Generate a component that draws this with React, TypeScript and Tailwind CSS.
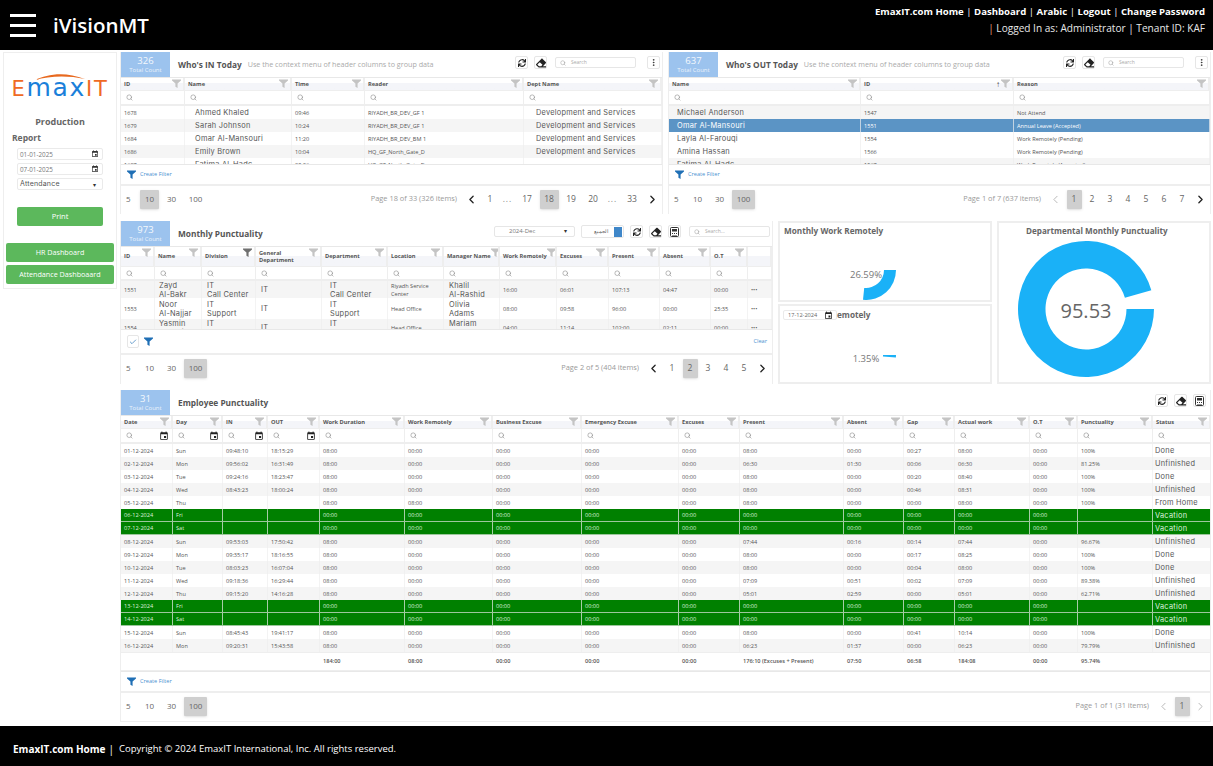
import { Check, ChevronLeft, ChevronRight, EllipsisVertical, Search } from "lucide-react";
import { FaEraser, FaSync } from "react-icons/fa";
import { MdEvent } from "react-icons/md";

type Column = {
  title: string;
  big?: boolean;
  indent?: string;
  cal?: boolean;
  dark?: boolean;
  sort?: boolean;
  blank?: boolean;
};

const IN_GRID = "grid grid-cols-[64px_107px_73px_159px_138px]";
const OUT_GRID = "grid grid-cols-[192px_153px_196px]";
const MONTH_GRID = "grid grid-cols-[34px_47px_54px_66px_66px_56px_56px_57px_52px_51px_51px_37px_24px]";
const EMP_GRID = "grid grid-cols-[52px_50px_45px_52px_85px_88px_89px_97px_61px_104px_60px_51px_75px_48px_75px_58px]";

const inColumns: Column[] = [
  { title: "ID" },
  { title: "Name", big: true, indent: "pl-[10px]" },
  { title: "Time" },
  { title: "Reader" },
  { title: "Dept Name", big: true, indent: "pl-[12px]" },
];

const inRows = [
  ["1678", "Ahmed Khaled", "09:46", "RIYADH_BR_DEV_GF 1", "Development and Services"],
  ["1679", "Sarah Johnson", "10:24", "RIYADH_BR_DEV_GF 1", "Development and Services"],
  ["1684", "Omar Al-Mansouri", "11:20", "RIYADH_BR_DEV_BM 1", "Development and Services"],
  ["1686", "Emily Brown", "10:04", "HQ_GF_North_Gate_D", "Development and Services"],
  ["1687", "Fatima Al-Hadc", "09:36", "HQ_GF_North_Gate_D", ""],
];

const outColumns: Column[] = [
  { title: "Name", big: true, indent: "pl-[8px]" },
  { title: "ID", sort: true },
  { title: "Reason" },
];

const outRows = [
  ["Michael Anderson", "1547", "Not Attend"],
  ["Omar Al-Mansouri", "1551", "Annual Leave (Accepted)"],
  ["Layla Al-Farouqi", "1554", "Work Remotely (Pending)"],
  ["Amina Hassan", "1566", "Work Remotely (Pending)"],
  ["Fatima Al-Hadc", "1567", "Work Remotely (Accepted)"],
];

const monthColumns: Column[] = [
  { title: "ID" },
  { title: "Name", big: true, indent: "pl-[4px]" },
  { title: "Division", big: true, indent: "pl-[5px]", dark: true },
  { title: "General\nDepartment", big: true, indent: "pl-[5px]" },
  { title: "Department", big: true, indent: "pl-[8px]" },
  { title: "Location" },
  { title: "Manager Name", big: true, indent: "pl-[5px]" },
  { title: "Work Remotely" },
  { title: "Excuses" },
  { title: "Present" },
  { title: "Absent" },
  { title: "O.T" },
  { title: "", blank: true },
];

const monthRows = [
  ["1551", "Zayd\nAl-Bakr", "IT\nCall Center", "IT", "IT\nCall Center", "Riyadh Service Center", "Khalil\nAl-Rashid", "16:00", "06:01", "107:13", "04:47", "00:00", "•••"],
  ["1553", "Noor\nAl-Najjar", "IT\nSupport", "IT", "IT\nSupport", "Head Office", "Olivia\nAdams", "08:00", "09:58", "96:00", "00:00", "25:35", "•••"],
  ["1554", "Yasmin\nAl-Amin", "IT\nSupport", "IT", "IT\nSupport", "Head Office", "Mariam\nSaleh", "04:00", "11:14", "102:00", "02:11", "00:00", "•••"],
];

const empColumns: Column[] = [
  { title: "Date", cal: true },
  { title: "Day", cal: true },
  { title: "IN", cal: true },
  { title: "OUT", cal: true },
  { title: "Work Duration" },
  { title: "Work Remotely" },
  { title: "Business Excuse" },
  { title: "Emergency Excuse" },
  { title: "Excuses" },
  { title: "Present" },
  { title: "Absent" },
  { title: "Gap" },
  { title: "Actual work" },
  { title: "O.T" },
  { title: "Punctuality" },
  { title: "Status", big: true },
];

function work(date: string, day: string, inT: string, outT: string, present: string, absent: string, gap: string, actual: string, pct: string, status: string) {
  return [date, day, inT, outT, "08:00", "00:00", "00:00", "00:00", "00:00", present, absent, gap, actual, "00:00", pct, status];
}

function vacation(date: string, day: string) {
  return [date, day, "", "", "00:00", "00:00", "00:00", "00:00", "00:00", "00:00", "00:00", "00:00", "00:00", "00:00", "", "Vacation"];
}

const empRows = [
  work("01-12-2024", "Sun", "09:48:10", "18:15:29", "08:00", "00:00", "00:27", "08:00", "100%", "Done"),
  work("02-12-2024", "Mon", "09:56:02", "16:31:49", "06:30", "01:30", "00:06", "06:30", "81.25%", "Unfinished"),
  work("03-12-2024", "Tue", "09:24:16", "18:23:47", "08:00", "00:00", "00:20", "08:40", "100%", "Done"),
  work("04-12-2024", "Wed", "08:43:23", "18:00:24", "08:00", "00:00", "00:46", "08:31", "100%", "Unfinished"),
  ["05-12-2024", "Thu", "", "", "08:00", "08:00", "00:00", "00:00", "00:00", "08:00", "00:00", "00:00", "08:00", "00:00", "100%", "From Home"],
  vacation("06-12-2024", "Fri"),
  vacation("07-12-2024", "Sat"),
  work("08-12-2024", "Sun", "09:53:03", "17:50:42", "07:44", "00:16", "00:14", "07:44", "96.67%", "Unfinished"),
  work("09-12-2024", "Mon", "09:35:17", "18:16:55", "08:00", "00:00", "00:17", "08:25", "100%", "Done"),
  work("10-12-2024", "Tue", "08:03:23", "16:07:04", "08:00", "00:00", "00:04", "08:00", "100%", "Done"),
  work("11-12-2024", "Wed", "09:18:36", "16:29:44", "07:09", "00:51", "00:02", "07:09", "89.38%", "Unfinished"),
  work("12-12-2024", "Thu", "09:15:20", "14:16:28", "05:01", "02:59", "00:00", "05:01", "62.71%", "Unfinished"),
  vacation("13-12-2024", "Fri"),
  vacation("14-12-2024", "Sat"),
  work("15-12-2024", "Sun", "08:45:43", "19:41:17", "08:00", "00:00", "00:41", "10:14", "100%", "Done"),
  work("16-12-2024", "Mon", "09:20:31", "15:43:58", "06:23", "01:37", "00:00", "06:23", "79.79%", "Unfinished"),
];

const summary = ["", "", "", "", "184:00", "08:00", "00:00", "00:00", "00:00", "176:10 (Excuses + Present)", "07:50", "06:58", "184:08", "00:00", "95.74%", ""];

function Funnel({ color = "#bdbdbd", size = 10 }: { color?: string; size?: number }) {
  return (
    <svg width={size} height={size} viewBox="0 0 10 10" className="shrink-0">
      <path d="M0 .5h10v1.2L6.2 5v5L3.8 8.6V5L0 1.7Z" fill={color} />
    </svg>
  );
}

function ToolButton({ children }: { children: React.ReactNode }) {
  return (
    <div className="flex h-[13px] w-[13px] shrink-0 items-center justify-center rounded-[2px] border border-[#e6e6e6] bg-white text-[#222]">
      {children}
    </div>
  );
}

function ExcelIcon() {
  return (
    <svg width="9" height="10" viewBox="0 0 9 10">
      <rect x=".5" y=".5" width="8" height="9" rx="1" fill="none" stroke="#333" />
      <rect x="2" y="2" width="5" height="2.5" fill="#333" />
      <path d="M2 6h1v1H2zM4 6h1v1H4zM6 6h1v1H6zM2 8h5v.6H2z" fill="#333" />
    </svg>
  );
}

function SearchBox({ label }: { label: string }) {
  return (
    <div className="flex h-[11px] w-[81px] shrink-0 items-center gap-[5px] rounded-[2px] border border-[#e6e6e6] pl-[4px] text-[5px] text-[#aaa]">
      <Search size={6} className="text-[#999]" />
      {label}
    </div>
  );
}

function CountBox({ value }: { value: string }) {
  return (
    <div className="flex h-[25px] w-[49px] shrink-0 flex-col items-center justify-center bg-[#9cc3ee] text-white">
      <div className="text-[9.5px] leading-[11px] opacity-90">{value}</div>
      <div className="text-[6px] leading-[9px] opacity-80">Total Count</div>
    </div>
  );
}

function DataTable({ grid, columns, rows, rowClass, cellText, headH, filterH, bodyH, rowH }: {
  grid: string;
  columns: Column[];
  rows: string[][];
  rowClass: (i: number) => string;
  cellText?: string;
  headH: string;
  filterH: string;
  bodyH: string;
  rowH: (i: number) => string;
}) {
  return (
    <div>
      <div className={`${grid} ${headH} border-t border-[#e8e8e8]`}>
        {columns.map((c, i) => (
          <div key={i} className="flex items-center justify-between overflow-hidden border-r-2 border-b border-[#eeeeee] bg-linear-to-b from-white from-45% to-[#f4f5f9] to-45% pr-[2px] pl-[3px]">
            <span className="shrink-0 text-[5.7px] leading-[7px] font-bold whitespace-pre text-[#555]">{c.title}</span>
            {!c.blank && (
              <span className="flex items-center gap-[1px] self-start pt-[1px]">
                {c.sort && <span className="text-[8px] leading-[8px] text-[#444]">↑</span>}
                <Funnel color={c.dark ? "#707070" : "#c4c4c4"} size={9} />
              </span>
            )}
          </div>
        ))}
      </div>
      <div className={`${grid} ${filterH} border-b-2 border-[#eeeeee]`}>
        {columns.map((c, i) => (
          <div key={i} className="flex items-center justify-between border-r border-[#eeeeee] pr-[3px] pl-[5px]">
            {!c.blank && <Search size={7} className="text-[#8a8a8a]" />}
            {c.cal && <MdEvent size={10} className="text-[#222]" />}
          </div>
        ))}
      </div>
      <div className={`${bodyH} overflow-hidden`}>
        {rows.map((r, i) => (
          <div key={i} className={`${grid} ${rowH(i)} ${rowClass(i)}`}>
            {r.map((v, j) => {
              const c = columns[j];
              return (
                <div
                  key={j}
                  className={`flex items-center overflow-hidden border-r border-[#eeeeee]/70 whitespace-pre-line ${
                    c.big
                      ? `pt-[2px] font-['Inter',sans-serif] text-[7.4px] leading-[8.3px] tracking-[0.25px] ${c.indent ?? "pl-[2px]"}`
                      : `pl-[3px] text-[5.6px] leading-[8px] ${cellText ?? ""}`
                  }`}
                >
                  {v}
                </div>
              );
            })}
          </div>
        ))}
      </div>
    </div>
  );
}

function PageSizes({ active }: { active: string }) {
  return (
    <div className="flex items-center gap-[3px] pl-[3px] text-[8px] text-[#666]">
      {["5", "10", "30", "100"].map((s) => (
        <div
          key={s}
          className={`flex h-[19px] items-center rounded-[1px] ${s === "5" ? "w-[13px] pl-[2px]" : s === "100" ? "w-[23px] justify-center" : "w-[19px] justify-center"} ${
            s === active ? "bg-[#cfcfcf] shadow-sm" : ""
          }`}
        >
          {s}
        </div>
      ))}
    </div>
  );
}

function Pages({ info, items, active, prevOff, nextOff }: {
  info: string;
  items: string[];
  active: string;
  prevOff?: boolean;
  nextOff?: boolean;
}) {
  return (
    <div className="flex items-center pr-[1px] text-[8.5px] text-[#666]">
      <span className="mr-[4px] text-[7.4px] text-[#9a9a9a]">{info}</span>
      <div className="flex w-[20px] justify-center">
        <ChevronLeft size={13} strokeWidth={prevOff ? 1.5 : 2.4} className={prevOff ? "text-[#aaa]" : "text-[#222]"} />
      </div>
      {items.map((p, i) =>
        p === "..." ? (
          <span key={i} className="w-[17px] text-center tracking-[1px] text-[#888]">...</span>
        ) : (
          <div key={i} className={`flex h-[19px] items-center justify-center ${p.length > 1 ? "w-[22px]" : "w-[18px]"}`}>
            <div className={`flex h-[19px] items-center justify-center rounded-[1px] ${p.length > 1 ? "w-[19px]" : "w-[15px]"} ${p === active ? "bg-[#cfcfcf] shadow-sm" : ""}`}>
              {p}
            </div>
          </div>
        ),
      )}
      <div className="flex w-[18px] justify-center">
        <ChevronRight size={13} strokeWidth={nextOff ? 1.5 : 2.4} className={nextOff ? "text-[#aaa]" : "text-[#222]"} />
      </div>
    </div>
  );
}

function Pager({ children }: { children: React.ReactNode }) {
  return (
    <div className="flex h-[28px] items-center justify-between border-t-2 border-[#eeeeee]">{children}</div>
  );
}

function CreateFilter({ h }: { h: string }) {
  return (
    <div className={`flex ${h} items-center gap-[4px] border-t border-[#e8e8e8] pl-[6px]`}>
      <Funnel color="#1f6fb5" size={9} />
      <span className="text-[5.6px] text-[#4a90d0]">Create Filter</span>
    </div>
  );
}

function Title({ text }: { text: string }) {
  return <div className="ml-[8px] pt-[1px] text-[8.3px] font-bold whitespace-nowrap text-[#555]">{text}</div>;
}

function arc(cx: number, cy: number, R: number, r: number, pct: number) {
  const a = (pct / 100) * Math.PI * 2;
  const large = pct > 50 ? 1 : 0;
  const x1 = cx + R * Math.cos(a);
  const y1 = cy + R * Math.sin(a);
  const x2 = cx + r * Math.cos(a);
  const y2 = cy + r * Math.sin(a);
  return `M${cx + R} ${cy}A${R} ${R} 0 ${large} 1 ${x1} ${y1}L${x2} ${y2}A${r} ${r} 0 ${large} 0 ${cx + r} ${cy}Z`;
}

function MainPanelHead({ count, title, subtitle, children }: { count: string; title: string; subtitle?: string; children: React.ReactNode }) {
  return (
    <div className="flex h-[25px] items-center">
      <CountBox value={count} />
      <Title text={title} />
      {subtitle && <div className="ml-[6px] text-[7.2px] whitespace-nowrap text-[#aaaaaa]">{subtitle}</div>}
      <div className="ml-auto flex items-center pr-[2px] pb-[4px]">{children}</div>
    </div>
  );
}

function WhoTools() {
  return (
    <>
      <ToolButton><FaSync size={8} /></ToolButton>
      <div className="ml-[6px]"><ToolButton><FaEraser size={10} /></ToolButton></div>
      <div className="mr-[11px] ml-[8px]"><SearchBox label="Search" /></div>
      <ToolButton><EllipsisVertical size={9} /></ToolButton>
    </>
  );
}

const stripe = (i: number) => (i % 2 === 1 ? "bg-[#f5f5f5] text-[#555]" : "bg-white text-[#555]");

export default function App() {
  return (
    <div className="flex h-[766px] w-[1213px] flex-col overflow-hidden bg-white font-['Open_Sans',sans-serif]">
      <header className="flex h-[50px] shrink-0 justify-between bg-black text-white">
        <div className="flex items-center">
          <div className="ml-[10px] flex w-[26px] flex-col gap-[7px]">
            <div className="h-[3px] bg-white" />
            <div className="h-[3px] bg-white" />
            <div className="h-[3px] bg-white" />
          </div>
          <div className="ml-[17px] text-[20.5px] leading-none font-semibold">iVisionMT</div>
        </div>
        <div className="pt-[5px] pr-[8px] text-right">
          <div className="text-[9.6px] leading-[14px] font-bold">
            EmaxIT.com Home<span className="font-normal"> | </span> Dashboard<span className="font-normal"> | </span> Arabic<span className="font-normal"> | </span> Logout<span className="font-normal"> | </span> Change Password
          </div>
          <div className="mt-[2px] text-[10.1px] leading-[15px] text-[#e8e8e8]">
            <span className="text-[#e8a27a]">|</span> Logged In as: Administrator | Tenant ID: KAF
          </div>
        </div>
      </header>

      <main className="flex min-h-0 flex-1 gap-[3px] pt-[2px] pl-[3px]">
        <aside className="flex h-[237px] w-[114px] shrink-0 flex-col border border-[#eeeeee] bg-white">
          <div className="mt-[20px] flex flex-col items-center">
            <svg width="50" height="7" viewBox="0 0 50 7" className="mb-[-1px]">
              <path d="M0 7C12 1 30-2 50 6 32 2 14 3 0 7Z" fill="#e8691f" />
            </svg>
            <div className="flex items-baseline font-['DejaVu_Sans',sans-serif] leading-[17px] tracking-[1.7px] text-[#ef6a24]">
              <span className="text-[21px]">E</span>
              <span className="text-[25px] text-[#1a80da]">max</span>
              <span className="text-[21px]">IT</span>
            </div>
          </div>
          <div className="mt-[17px] text-center text-[9px] font-bold text-[#666]">Production</div>
          <div className="mt-[3px] pl-[8px] text-[8.5px] font-bold text-[#666]">Report</div>
          <div className="mt-[4px] flex flex-col gap-[3px] px-[13px] text-[6.3px] text-[#777]">
            {["01-01-2025", "07-01-2025"].map((d) => (
              <div key={d} className="flex h-[12px] items-center justify-between rounded-[2px] border border-[#eaeaea] pr-[3px] pl-[2px]">
                {d}
                <MdEvent size={8} className="text-[#333]" />
              </div>
            ))}
            <div className="flex h-[12px] items-center justify-between rounded-[2px] border border-[#eaeaea] pr-[6px] pl-[2px] font-['Inter',sans-serif] text-[7px] tracking-[0.2px] text-[#555]">
              Attendance
              <span className="text-[6px] text-[#333]">▾</span>
            </div>
          </div>
          <div className="mx-[13px] mt-[17px] flex h-[19px] items-center justify-center rounded-[2px] bg-[#5cb85c] text-[7.5px] text-white">Print</div>
          <div className="mx-[2px] mt-[17px] flex h-[19px] items-center justify-center rounded-[2px] bg-[#5cb85c] text-[7.2px] text-white">HR Dashboard</div>
          <div className="mx-[2px] mt-[3px] flex h-[19px] items-center justify-center rounded-[2px] bg-[#5cb85c] text-[7.2px] text-white">Attendance Dashboaard</div>
        </aside>

        <div className="flex w-[1091px] flex-col">
          <div className="flex gap-[5px]">
            <section className="h-[162px] w-[543px] border-x border-[#eeeeee]">
              <MainPanelHead count="326" title="Who's IN Today" subtitle="Use the context menu of header columns to group data">
                <WhoTools />
              </MainPanelHead>
              <DataTable grid={IN_GRID} columns={inColumns} rows={inRows} rowClass={stripe} headH="h-[14px]" filterH="h-[15px]" bodyH="h-[58px]" rowH={() => "h-[13px]"} />
              <CreateFilter h="h-[20px]" />
              <Pager>
                <PageSizes active="10" />
                <Pages info="Page 18 of 33 (326 items)" items={["1", "...", "17", "18", "19", "20", "...", "33"]} active="18" />
              </Pager>
            </section>
            <section className="h-[162px] w-[543px] border-x border-[#eeeeee]">
              <MainPanelHead count="637" title="Who's OUT Today" subtitle="Use the context menu of header columns to group data">
                <WhoTools />
              </MainPanelHead>
              <DataTable
                grid={OUT_GRID}
                columns={outColumns}
                rows={outRows}
                rowClass={(i) => (i === 1 ? "bg-[#5b94c5] text-white" : i === 0 || i === 4 ? "bg-[#f5f5f5] text-[#555]" : "bg-white text-[#555]")}
                headH="h-[14px]"
                filterH="h-[15px]"
                bodyH="h-[58px]"
                rowH={() => "h-[13px]"}
              />
              <CreateFilter h="h-[20px]" />
              <Pager>
                <PageSizes active="100" />
                <Pages info="Page 1 of 7 (637 items)" items={["1", "2", "3", "4", "5", "6", "7"]} active="1" prevOff />
              </Pager>
            </section>
          </div>

          <div className="mt-[7px] flex gap-[5px]">
            <section className="h-[163px] w-[653px] border-x border-[#eeeeee]">
              <MainPanelHead count="973" title="Monthly Punctuality">
                <div className="flex h-[11px] w-[81px] items-center justify-between rounded-[2px] border border-[#e6e6e6] pr-[7px] pl-[14px] text-[6px] text-[#777]">
                  2024-Dec
                  <span className="text-[6px] text-[#333]">▾</span>
                </div>
                <div className="mx-[6px] flex h-[13px] w-[43px] items-center justify-end gap-[6px] rounded-[2px] border border-[#e6e6e6] pr-[1px] text-[5px] text-[#555]">
                  الجميع
                  <div className="h-[10px] w-[8px] bg-[#3f87c9]" />
                </div>
                <ToolButton><FaSync size={8} /></ToolButton>
                <div className="mx-[6px]"><ToolButton><FaEraser size={10} /></ToolButton></div>
                <ToolButton><ExcelIcon /></ToolButton>
                <div className="ml-[8px]"><SearchBox label="Search..." /></div>
              </MainPanelHead>
              <DataTable
                grid={MONTH_GRID}
                columns={monthColumns}
                rows={monthRows}
                rowClass={(i) => (i % 2 === 0 ? "bg-[#f5f5f5] text-[#555]" : "bg-white text-[#555]")}
                headH="h-[21px]"
                filterH="h-[14px]"
                bodyH="h-[48px]"
                rowH={(i) => (i === 1 ? "h-[21px]" : "h-[17px]")}
              />
              <div className="flex h-[24px] items-center border-t border-[#e8e8e8] pr-[5px] pl-[6px]">
                <div className="flex h-[13px] w-[12px] items-center justify-center rounded-[2px] border border-[#e6e6e6]">
                  <Check size={8} strokeWidth={2} className="text-[#1f6fb5]" />
                </div>
                <div className="ml-[5px]"><Funnel color="#1f6fb5" size={9} /></div>
                <span className="ml-auto text-[5.6px] text-[#4a90d0]">Clear</span>
              </div>
              <Pager>
                <PageSizes active="100" />
                <Pages info="Page 2 of 5 (404 items)" items={["1", "2", "3", "4", "5"]} active="2" />
              </Pager>
            </section>

            <div className="flex w-[214px] flex-col gap-[2px]">
              <div className="relative h-[81px] border-2 border-[#eeeeee]">
                <div className="pt-[2px] pl-[4px] text-[8.2px] font-bold text-[#666]">Monthly Work Remotely</div>
                <svg width="210" height="77" viewBox="0 0 210 77" className="absolute top-0 left-0">
                  <path d={arc(86, 47, 30, 18, 26.59)} fill="#1ab1f7" />
                  <text x="86" y="55" textAnchor="middle" fontSize="9.5" fill="#777">26.59%</text>
                </svg>
              </div>
              <div className="relative h-[80px] border-2 border-[#eeeeee]">
                <div className="flex items-center pt-[3px] pl-[3px]">
                  <div className="flex h-[10px] w-[54px] items-center justify-between rounded-[2px] border border-[#eaeaea] pr-[3px] pl-[4px] text-[5.6px] text-[#666]">
                    17-12-2024
                    <MdEvent size={9} className="text-[#222]" />
                  </div>
                  <span className="text-[8.2px] font-bold text-[#666]">emotely</span>
                </div>
                <svg width="210" height="76" viewBox="0 0 210 76" className="absolute top-0 left-0">
                  <path d={arc(86, 49, 30, 17, 1.35)} fill="#1ab1f7" />
                  <text x="86" y="56" textAnchor="middle" fontSize="9.5" fill="#777">1.35%</text>
                </svg>
              </div>
            </div>

            <div className="relative h-[163px] w-[214px] border-2 border-[#eeeeee]">
              <div className="pt-[2px] pl-[27px] text-[8.1px] font-bold text-[#666]">Departmental Monthly Punctuality</div>
              <svg width="210" height="159" viewBox="0 0 210 159" className="absolute top-0 left-0">
                <path d={arc(87, 86, 68, 40.5, 95.53)} fill="#1ab1f7" />
                <text x="87" y="95" textAnchor="middle" fontSize="20" fill="#666">95.53</text>
              </svg>
            </div>
          </div>

          <section className="mt-[6px] h-[332px] w-[1091px] border-x border-b border-[#eeeeee]">
            <MainPanelHead count="31" title="Employee Punctuality">
              <ToolButton><FaSync size={8} /></ToolButton>
              <div className="mx-[6px]"><ToolButton><FaEraser size={10} /></ToolButton></div>
              <div className="mr-[2px]"><ToolButton><ExcelIcon /></ToolButton></div>
            </MainPanelHead>
            <DataTable
              grid={EMP_GRID}
              columns={empColumns}
              rows={empRows}
              rowClass={(i) => ([5, 6, 12, 13].includes(i) ? "bg-[#008000] text-[#dff0df] border-b border-[#9cc79c]" : stripe(i))}
              headH="h-[14px]"
              filterH="h-[15px]"
              bodyH="h-[208px]"
              rowH={() => "h-[13px]"}
            />
            <div className={`${EMP_GRID} h-[19px] items-center border-y border-[#eeeeee] text-[5.6px] font-semibold text-[#555]`}>
              {summary.map((s, i) => (
                <div key={i} className="pl-[3px] whitespace-nowrap">{s}</div>
              ))}
            </div>
            <CreateFilter h="h-[20px]" />
            <Pager>
              <PageSizes active="100" />
              <Pages info="Page 1 of 1 (31 items)" items={["1"]} active="1" prevOff nextOff />
            </Pager>
          </section>
        </div>
      </main>

      <footer className="flex h-[40px] shrink-0 items-center bg-black pt-[7px] pl-[13px] text-white">
        <span className="text-[10px] font-bold">EmaxIT.com Home</span>
        <span className="mx-[3px] text-[10px]">|</span>
        <span className="ml-[2px] text-[9.5px]">Copyright © 2024 EmaxIT International, Inc. All rights reserved.</span>
      </footer>
    </div>
  );
}
